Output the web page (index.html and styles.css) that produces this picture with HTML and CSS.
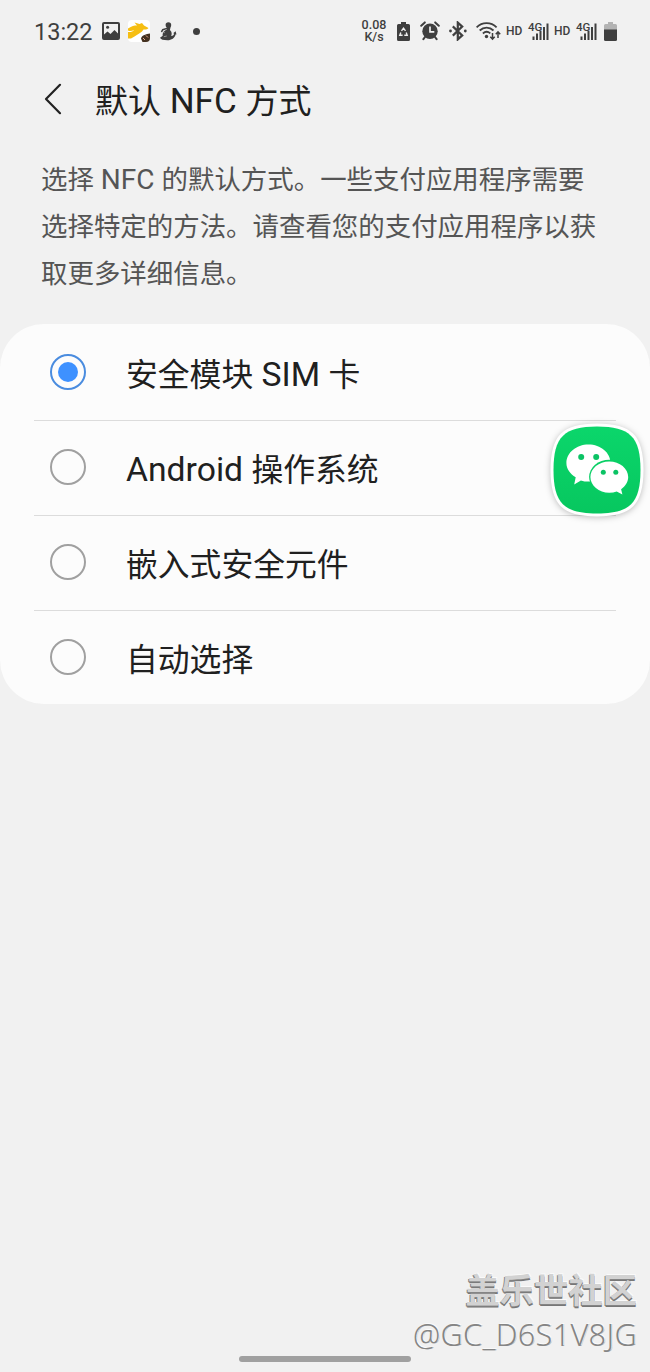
FILE: index.html
```
<!DOCTYPE html>
<html lang="zh-CN">
<head>
    <meta charset="UTF-8">
    <title>默认 NFC 方式</title>
    <link rel="stylesheet" href="styles.css">
</head>
<body>
    <div class="status-bar">
        <div class="status-left">
            <span class="clock">13:22</span>
            <svg class="icon-picture" width="18" height="18" viewBox="0 0 18 18">
                <path fill="#3f3f3f" fill-rule="evenodd" d="M2 0h14a2 2 0 0 1 2 2v14a2 2 0 0 1-2 2H2a2 2 0 0 1-2-2V2a2 2 0 0 1 2-2zM2 2v10.500l3.500-3 3 2.500 4-4 3.500 3.500V2z"/>
                <circle cx="5.600" cy="5.300" r="1.500" fill="#3f3f3f"/>
            </svg>
            <svg class="icon-app" width="22" height="22" viewBox="0 0 22 22">
                <rect width="22" height="22" rx="4" fill="#fff"/>
                <path fill="#f6be12" d="M0 8.500c4-2.500 6-3 9-3L6.500 2.500l5 1.500L14 3l2 2.500L20.500 8c-1 1.500-3 1.700-5 1.500l-1.500 2c-2 2-5 3-7.500 5L3 18.500H0z"/>
                <path fill="#fff" d="M0 10.500c2 1 4 .5 6-.5-1 1.500-3 2.200-6 2z"/>
                <path fill="#44301f" d="M13 18.500c1-3.500 5-4.500 9-5V18a4 4 0 0 1-4 4h-3.500z"/>
                <path stroke="#e6a98b" d="M15 18l2 2M18 15.500l2 2"/>
            </svg>
            <svg class="icon-figure" width="17" height="19" viewBox="0 0 17 19">
                <g fill="#3f3f3f">
                    <circle cx="8.400" cy="3" r="2.800"/>
                    <path d="M6.500 4h4c.4 2-.8 3-.4 4.300C12 10 12 12 11.200 14c2-.2 2.700-1.200 2.900-2.500l-1-.3 2.500-1.900.9 3.100-.8-.2c-.8 3.800-4.200 6-8.200 6-4 0-7-.8-7.500-2.500l2.700-1.900C2.100 11.500 3.600 9 6.800 7.500z"/>
                </g>
                <path stroke="#b5b5b5" stroke-width=".7" fill="none" d="M3.200 9.800l1.600 1M3.800 14.700l3-.7"/>
                <path stroke="#3f3f3f" stroke-width="1.500" fill="none" d="M7 6.400L2.800 7.700 1.400 10"/>
            </svg>
            <span class="more-dot"></span>
        </div>
        <div class="status-right">
            <div class="net-speed"><span>0.08</span><span>K/s</span></div>
            <svg class="icon-saver" width="13" height="19" viewBox="0 0 13 19">
                <path fill="#3f3f3f" d="M4 0h5v2h2.500A1.500 1.500 0 0 1 13 3.500v14a1.500 1.500 0 0 1-1.500 1.500h-10A1.500 1.500 0 0 1 0 17.500v-14A1.500 1.500 0 0 1 1.500 2H4z"/>
                <path fill="none" stroke="#f1f1f1" stroke-width="1.400" d="M4.500 8.900l2-2.700 2 2.700M3.800 10.400l-1 2.800h2.800M9.200 10.400l1 2.800H7.300"/>
            </svg>
            <svg class="icon-alarm" width="20" height="20" viewBox="0 0 20 20">
                <circle cx="10" cy="10.300" r="7.700" fill="#3f3f3f"/>
                <path fill="none" stroke="#3f3f3f" stroke-width="2" stroke-linecap="round" d="M1.200 4.800L4.800 1.400M18.800 4.800l-3.600-3.400M5 16l-1.600 2.200M15 16l1.600 2.200"/>
                <path fill="none" stroke="#f1f1f1" stroke-width="1.700" d="M10 5.500v5.300h4.300"/>
            </svg>
            <svg class="icon-bluetooth" width="18" height="20" viewBox="0 0 18 20">
                <path fill="none" stroke="#3f3f3f" stroke-width="2.200" d="M3.800 5.400l9.400 9-4.400 4V1.600l4.400 4-9.400 9"/>
                <circle cx="1.500" cy="10" r="1.400" fill="#3f3f3f"/>
                <circle cx="16.300" cy="10" r="1.400" fill="#3f3f3f"/>
            </svg>
            <svg class="icon-wifi" width="25" height="20" viewBox="0 0 25 20">
                <g fill="none" stroke="#3f3f3f" stroke-width="1.800">
                    <path d="M.6 6.300c5.600-5.500 14.400-5.500 20 0M3.700 9.500c4-3.900 9.800-3.900 13.800 0M6.900 12.500c2.200-2 5.200-2 7.400-.1"/>
                </g>
                <circle cx="10.500" cy="15.500" r="1.700" fill="#3f3f3f"/>
                <path fill="none" stroke="#3f3f3f" stroke-width="1.500" d="M16.500 12v6M14.300 15.800l2.200 2.400 2.200-2.400M22 17v-6M19.800 13.200L22 10.800l2.200 2.400"/>
            </svg>
            <span class="hd">HD</span>
            <div class="signal">
                <span class="signal-type">4G</span>
                <svg width="21" height="20" viewBox="0 0 21 20">
                    <path fill="#3f3f3f" d="M4.500 15.500h2V19h-2zM8 12.500h2V19H8zM11.500 10h2v9h-2zM15 6h2v13h-2zM18.500 2.500h2V19h-2z"/>
                </svg>
            </div>
            <span class="hd">HD</span>
            <div class="signal">
                <span class="signal-type">4G</span>
                <svg width="21" height="20" viewBox="0 0 21 20">
                    <path fill="#3f3f3f" d="M4.500 15.500h2V19h-2zM8 12.500h2V19H8zM11.500 10h2v9h-2zM15 6h2v13h-2zM18.500 2.500h2V19h-2z"/>
                </svg>
            </div>
            <svg class="icon-battery" width="13" height="19" viewBox="0 0 13 19">
                <path fill="#b3b3b3" d="M4 0h5v2h2.500A1.500 1.500 0 0 1 13 3.500V8H0V3.500A1.500 1.500 0 0 1 1.500 2H4z"/>
                <path fill="#3f3f3f" d="M0 7.500h13v10a1.500 1.500 0 0 1-1.500 1.500h-10A1.500 1.500 0 0 1 0 17.500z"/>
            </svg>
        </div>
    </div>

    <div class="header">
        <svg class="back" width="18" height="32" viewBox="0 0 18 32">
            <path fill="none" stroke="#222" stroke-width="2.200" stroke-linecap="round" stroke-linejoin="round" d="M16 1.800L2 16l14 14.200"/>
        </svg>
        <h1>默认<span class="latin"> NFC </span>方式</h1>
    </div>

    <p class="description">选择<span class="latin"> NFC </span>的默认方式。一些支付应用程序需要<br>选择特定的方法。请查看您的支付应用程序以获<br>取更多详细信息。</p>

    <div class="options">
        <label class="option"><span class="radio checked"></span><span class="label">安全模块<span class="latin"> SIM </span>卡</span></label>
        <label class="option"><span class="radio"></span><span class="label"><span class="latin">Android </span>操作系统</span></label>
        <label class="option"><span class="radio"></span><span class="label">嵌入式安全元件</span></label>
        <label class="option"><span class="radio"></span><span class="label">自动选择</span></label>
    </div>

    <!-- floating app shortcut -->
    <svg class="floating-app" width="98" height="98" viewBox="0 0 98 98">
        <defs>
            <linearGradient id="green" x1="0" y1="0" x2="0" y2="1">
                <stop offset="0" stop-color="#0bd66b"/>
                <stop offset="1" stop-color="#07c75f"/>
            </linearGradient>
        </defs>
        <path fill="url(#green)" stroke="#fff" stroke-width="6" paint-order="stroke" d="M49 5.500C82 5.500 92.500 16 92.500 49S82 92.500 49 92.500 5.500 82 5.500 49 16 5.500 49 5.500z"/>
        <path fill="#fff" d="M40.500 23.500c12.200 0 22 8.200 22 18.500s-9.800 18.600-22 18.600c-2.800 0-5.300-.4-7.600-1.200l-6.700 4.100 1.500-7.200c-5.600-3.400-9.300-8.500-9.300-14.300 0-10.300 9.900-18.500 22.100-18.500z"/>
        <ellipse cx="61.300" cy="56" rx="20.200" ry="17.200" fill="#09cf65"/>
        <path fill="#fff" d="M61.300 40.400c10.500 0 18.900 7 18.900 15.700 0 4.900-2.800 9.200-7.100 12.200l1.300 5.300-5.700-3c-2.300.8-4.800 1.200-7.400 1.200-10.500 0-18.900-7-18.900-15.700s8.400-15.700 18.900-15.700z"/>
        <g fill="#0bc364">
            <circle cx="33.200" cy="36" r="3"/>
            <circle cx="48.200" cy="36" r="3"/>
            <circle cx="55.300" cy="51.200" r="2.500"/>
            <circle cx="67.800" cy="51.200" r="2.500"/>
        </g>
    </svg>

    <div class="footer">
        <div class="community">盖乐世社区</div>
        <div class="user">@GC_D6S1V8JG</div>
        <div class="home-bar"></div>
    </div>
</body>
</html>
```
FILE: styles.css
```
* {
    box-sizing: border-box;
}

body {
    position: relative;
    display: flex;
    flex-direction: column;
    height: 1372px;
    margin: 0;
    overflow: hidden;
    background-color: #f1f1f1;
    color: #202020;
    font-family: Roboto, 'Noto Sans CJK SC', sans-serif;
}

svg {
    display: block;
    flex-shrink: 0;
}

.latin {
    font-size: 1.06em;
    line-height: 1;
}

.status-bar {
    display: flex;
    justify-content: space-between;
    height: 62px;
    padding: 0 33px 0 34px;
    color: #3f3f3f;
}

.status-left,
.status-right {
    display: flex;
    align-items: center;
}

.clock {
    width: 68px;
    font-size: 23.5px;
    line-height: 28px;
    padding-top: 2px;
}

.icon-app {
    margin-left: 8px;
}

.icon-figure {
    margin-left: 10px;
}

.more-dot {
    width: 7px;
    height: 7px;
    margin-left: 16px;
    border-radius: 50%;
    background-color: #3f3f3f;
}

.net-speed {
    display: flex;
    flex-direction: column;
    align-items: center;
    width: 26px;
    font-size: 12.5px;
    font-weight: 500;
    line-height: 12px;
}

.icon-saver {
    margin-left: 10px;
}

.icon-alarm {
    margin-left: 10px;
}

.icon-bluetooth {
    margin-left: 9px;
}

.icon-wifi {
    margin-left: 9px;
}

.hd {
    width: 17px;
    margin-left: 5px;
    font-size: 12px;
    font-weight: 500;
}

.signal {
    position: relative;
    width: 21px;
    margin-left: 5px;
}

.signal-type {
    position: absolute;
    top: 0;
    left: 0;
    font-size: 11.5px;
    font-weight: 500;
    line-height: 12px;
}

.icon-battery {
    margin-left: 7px;
}

.header {
    display: flex;
    align-items: center;
    height: 76px;
    padding-left: 44px;
}

.back {
    margin-bottom: 2px;
}

h1 {
    margin: 4px 0 0 33px;
    font-size: 33px;
    font-weight: 400;
    line-height: 48px;
}

.description {
    height: 141px;
    margin: 18px 0 0 41px;
    color: #555;
    font-size: 26.45px;
    line-height: 47px;
    white-space: nowrap;
}

.options {
    height: 380px;
    margin-top: 27px;
    padding: 1px 34px 0;
    border-radius: 44px;
    background-color: #fcfcfc;
}

.option {
    display: flex;
    align-items: center;
    height: 95px;
    padding: 0 0 3px 16px;
    border-top: 1px solid #dcdcdc;
}

.option:first-child {
    border-color: transparent;
}

.radio {
    display: flex;
    align-items: center;
    justify-content: center;
    width: 36px;
    height: 36px;
    border: 2px solid #a0a0a0;
    border-radius: 50%;
}

.radio.checked {
    border-color: #4a8cdf;
}

.radio.checked::after {
    content: "";
    width: 20px;
    height: 20px;
    border-radius: 50%;
    background-color: #3e91ff;
}

.label {
    margin: 6px 0 0 40px;
    font-size: 31.8px;
    line-height: 46px;
}

.floating-app {
    position: absolute;
    top: 421px;
    left: 548px;
    filter: drop-shadow(0 1px 3px rgba(0, 0, 0, 0.25));
}

.footer {
    display: flex;
    flex-direction: column;
    align-items: flex-end;
    margin-top: auto;
    padding: 0 13px 10px 0;
}

.community {
    color: #d2d2d2;
    font-size: 34.3px;
    font-weight: 700;
    line-height: 46px;
    text-shadow: -1px 1px 0 #858585, 0 2px 0 #777, 1px -1px 0 #fafafa;
}

.user {
    color: #858585;
    font-family: 'Noto Sans', sans-serif;
    font-size: 30.7px;
    font-weight: 300;
    letter-spacing: 0.3px;
    line-height: 40px;
    text-shadow: 1px -1px 0 #fafafa, 1px 0 0 #b8b8b8;
}

.home-bar {
    align-self: center;
    width: 172px;
    height: 6px;
    margin: 2px 0 0 13px;
    border-radius: 3px;
    background-color: #a0a0a0;
}
```
